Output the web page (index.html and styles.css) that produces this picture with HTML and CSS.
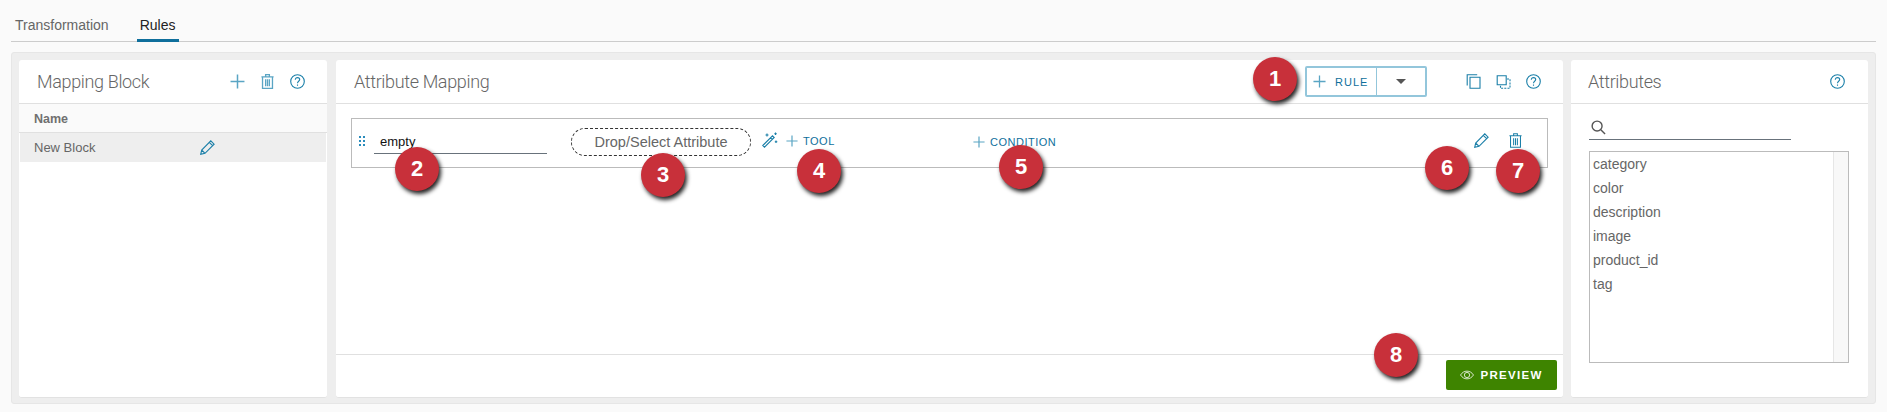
FILE: index.html
```html
<!DOCTYPE html>
<html lang="en">
<head>
  <meta charset="UTF-8" />
  <title>Rules</title>
  <link rel="stylesheet" href="styles.css">
</head>
<body>

  <svg class="defs" width="0" height="0">
    <symbol id="i-plus" viewBox="0 0 14 14"><path d="M7 0.5v13M0.5 7h13"/></symbol>
    <symbol id="i-trash" viewBox="0 0 14 16"><path d="M0.5 3h13M5 3V0.7h4V3M1.700 3v12.300h10.600V3M5 5.500v7.500M7 5.500v7.500M9 5.500v7.500"/></symbol>
    <symbol id="i-help" viewBox="0 0 15 15"><circle cx="7.500" cy="7.500" r="6.800"/><path d="M5.300 5.800c0-1.400 1-2.200 2.200-2.200s2.200.8 2.200 2c0 1.700-2.200 1.700-2.200 3.600M7.500 10.600v1.200"/></symbol>
    <symbol id="i-pencil" viewBox="0 0 15 15"><path d="M0.700 14.300l1-4.300L10.800 0.900l3.300 3.300L5 13.300zM1.700 10l3.300 3.300M9.300 2.400l3.300 3.300"/></symbol>
  </svg>

  <!-- Tabs -->
  <nav class="tabs">
    <a class="tab">Transformation</a>
    <a class="tab tab-active">Rules</a>
  </nav>

  <!-- Panels -->
  <main class="panels">

    <section class="card card-blocks">
      <header class="card-head">
        <h2>Mapping Block</h2>
        <div class="head-icons">
          <svg class="icon icon-lt"><use href="#i-plus"/></svg>
          <svg class="icon icon-lt"><use href="#i-trash"/></svg>
          <svg class="icon"><use href="#i-help"/></svg>
        </div>
      </header>
      <div class="block-title">Name</div>
      <div class="block-row">
        <span class="block-name">New Block</span>
        <svg class="icon"><use href="#i-pencil"/></svg>
      </div>
    </section>

    <section class="card card-mapping">
      <header class="card-head">
        <h2>Attribute Mapping</h2>
        <div class="rule-btn">
          <span class="rule-add"><svg class="icon icon-lt"><use href="#i-plus"/></svg>RULE</span>
          <span class="rule-more"><i class="arrow"></i></span>
        </div>
        <div class="head-icons head-icons-map">
          <svg class="icon" viewBox="0 0 14 15"><path d="M3.500 14.300V3.200h10v11.100zM0.700 11.500V0.700h10"/></svg>
          <svg class="icon" viewBox="0 0 14 15"><path d="M0.700 1.700h9v9h-9z"/><path d="M10.500 5h3v9.300H4v-3" stroke-dasharray="2 1.200"/></svg>
          <svg class="icon"><use href="#i-help"/></svg>
        </div>
      </header>

      <div class="mapping-body">
        <div class="rule-row">
          <span class="handle">
            <i></i><i></i><i></i><i></i><i></i><i></i>
          </span>
          <span class="rule-name">empty</span>
          <span class="drop">Drop/Select Attribute</span>
          <svg class="icon wand" viewBox="0 0 16 16"><path d="M0.800 13.500L10.500 3.800l1.700 1.700-9.700 9.700zM8.500 5.800l1.700 1.700M5 1.500v3M3.500 3h3M13.500 0.500v2.500M12.300 1.700h2.500M14 8.500v2.500M12.800 9.700h2.500"/></svg>
          <span class="link link-tool"><svg class="icon icon-lt"><use href="#i-plus"/></svg>TOOL</span>
          <span class="link link-cond"><svg class="icon icon-lt"><use href="#i-plus"/></svg>CONDITION</span>
          <div class="row-icons">
            <svg class="icon"><use href="#i-pencil"/></svg>
            <svg class="icon"><use href="#i-trash"/></svg>
          </div>
        </div>
      </div>

      <footer class="card-foot">
        <button class="preview" type="button">
          <svg class="eye" viewBox="0 0 16 10"><path d="M0.600 5C2.500 2 5 0.600 8 0.600S13.500 2 15.400 5C13.500 8 11 9.400 8 9.400S2.500 8 0.600 5z"/><circle cx="8" cy="5" r="3"/></svg>
          PREVIEW
        </button>
      </footer>
    </section>

    <section class="card card-attrs">
      <header class="card-head">
        <h2>Attributes</h2>
        <div class="head-icons">
          <svg class="icon"><use href="#i-help"/></svg>
        </div>
      </header>
      <div class="attrs-body">
        <div class="search">
          <svg class="search-icon" viewBox="0 0 16 16"><circle cx="6.500" cy="6.500" r="5.300"/><path d="M10.500 10.500L15 15"/></svg>
        </div>
        <div class="attr-box">
          <ul class="attr-list">
            <li>category</li>
            <li>color</li>
            <li>description</li>
            <li>image</li>
            <li>product_id</li>
            <li>tag</li>
          </ul>
          <div class="attr-scroll"></div>
        </div>
      </div>
    </section>

  </main>

  <!-- Numbered callouts -->
  <span class="callout c1">1</span>
  <span class="callout c2">2</span>
  <span class="callout c3">3</span>
  <span class="callout c4">4</span>
  <span class="callout c5">5</span>
  <span class="callout c6">6</span>
  <span class="callout c7">7</span>
  <span class="callout c8">8</span>

</body>
</html>
```

FILE: styles.css
```css
* {
  box-sizing: border-box;
}

body {
  margin: 0;
  height: 412px;
  overflow: hidden;
  position: relative;
  background-color: #fafafa;
  font-family: "Liberation Sans", Arial, sans-serif;
  color: #666;
}

.defs {
  position: absolute;
}

.icon {
  width: 15px;
  height: 15px;
  fill: none;
  stroke: #1a7fa8;
  stroke-width: 1.1;
  flex: none;
}

.icon-lt {
  stroke: #5aa5c4;
  stroke-width: 1.4;
}

/* tabs */
.tabs {
  margin: 0 11px;
  height: 42px;
  display: flex;
  gap: 31px;
  padding-left: 4px;
  border-bottom: 1px solid #ccc;
}

.tab {
  font-size: 14px;
  color: #666;
  padding: 17px 0 0;
  height: 42px;
}

.tab-active {
  color: #222;
  border-bottom: 3px solid #0f6f9c;
  margin-left: -3px;
  padding-left: 3px;
  padding-right: 4px;
}

/* panels */
.panels {
  margin: 10px 11px 0;
  height: 352px;
  padding: 7px 7px 5px;
  display: flex;
  gap: 8px;
  background-color: #eee;
  border: 1px solid #e6e6e6;
  border-radius: 3px;
}

.card {
  background-color: #fff;
  border-radius: 3px;
  border-bottom: 1px solid #e2e2e2;
  display: flex;
  flex-direction: column;
}

.card-blocks {
  width: 308px;
  margin-right: 1px;
}

.card-mapping {
  flex: 1;
}

.card-attrs {
  width: 297px;
}

.card-head {
  height: 44px;
  flex: none;
  display: flex;
  align-items: center;
  border-bottom: 1px solid #e0e0e0;
}

.card-head h2 {
  margin: 0;
  font-family: Roboto, sans-serif;
  font-size: 18px;
  font-weight: 300;
  letter-spacing: -0.35px;
  color: #666;
}

.card-blocks h2 {
  padding-left: 18px;
}

.card-mapping h2 {
  padding-left: 18px;
}

.card-attrs h2 {
  padding-left: 17px;
}

.head-icons {
  margin-left: auto;
  display: flex;
  gap: 15px;
  padding-right: 22px;
}

.card-attrs .head-icons {
  padding-right: 23px;
}

/* mapping block list */
.block-title {
  height: 29px;
  padding: 8px 15px;
  font-size: 12.5px;
  font-weight: bold;
  color: #707070;
  background-color: #fafafa;
  border-bottom: 1px solid #e0e0e0;
}

.block-row {
  height: 29px;
  display: flex;
  align-items: center;
  padding-left: 14px;
  font-size: 13px;
  background-color: #eee;
  margin: 0 1px;
}

.block-name {
  width: 166px;
}

/* rule button */
.rule-btn {
  margin-left: auto;
  margin-right: 39px;
  width: 122px;
  height: 31px;
  display: flex;
  border: 2px solid #93c6db;
  border-radius: 2px;
}

.rule-add {
  width: 70px;
  display: flex;
  align-items: center;
  gap: 9px;
  padding-left: 6px;
  font-size: 11px;
  letter-spacing: 1px;
  color: #0f6f9c;
  border-right: 1px solid #93c6db;
}

.rule-add .icon {
  width: 13px;
  height: 13px;
}

.rule-more {
  flex: 1;
  display: flex;
  align-items: center;
  justify-content: center;
}

.arrow {
  width: 0;
  height: 0;
  border-left: 5px solid transparent;
  border-right: 5px solid transparent;
  border-top: 5px solid #555;
}

.head-icons-map {
  margin-left: 0;
  padding-right: 22px;
}

/* rule row */
.mapping-body {
  flex: 1;
  padding: 14px 15px;
}

.rule-row {
  height: 50px;
  display: flex;
  align-items: center;
  border: 1px solid #bbb;
  position: relative;
}

.handle {
  width: 6px;
  height: 10px;
  margin-left: 7px;
  margin-top: -4px;
  display: grid;
  grid-template-columns: 2px 2px;
  grid-template-rows: repeat(3, 2px);
  gap: 2px;
}

.handle i {
  background-color: #2a8cbc;
}

.rule-name {
  width: 173px;
  height: 24px;
  margin-left: 9px;
  margin-top: -2px;
  padding: 4px 0 0 6px;
  font-size: 13px;
  color: #111;
  border-bottom: 1px solid #68727b;
}

.drop {
  width: 180px;
  height: 28px;
  margin-left: 24px;
  display: flex;
  align-items: center;
  justify-content: center;
  font-size: 14.5px;
  color: #666;
  border: 1px dashed #333;
  border-radius: 14px;
  margin-top: -3px;
}

.wand {
  width: 16px;
  height: 16px;
  margin-left: 11px;
  margin-top: -6px;
}

.link {
  display: flex;
  align-items: center;
  gap: 5px;
  font-size: 11px;
  letter-spacing: 0.5px;
  color: #0f6f9c;
  margin-top: -5px;
}

.link .icon {
  width: 12px;
  height: 12px;
}

.link-tool {
  width: 187px;
  margin-left: 8px;
}

.link-cond {
  margin-top: -3px;
}

.row-icons {
  margin-left: auto;
  margin-top: -6px;
  display: flex;
  gap: 19px;
  padding-right: 24px;
}

/* footer */
.card-foot {
  height: 43px;
  flex: none;
  display: flex;
  justify-content: flex-end;
  padding: 5px 6px 0 0;
  border-top: 1px solid #e0e0e0;
}

.preview {
  width: 111px;
  height: 30px;
  display: flex;
  align-items: center;
  justify-content: center;
  gap: 6px;
  border: 0;
  border-radius: 2px;
  background-color: #3e8400;
  color: #fff;
  font-family: "Liberation Sans", Arial, sans-serif;
  font-size: 11.5px;
  font-weight: bold;
  letter-spacing: 1.3px;
}

.eye {
  width: 14px;
  height: 10px;
  fill: none;
  stroke: #fff;
  stroke-width: 0.9;
}

/* attributes */
.attrs-body {
  padding: 13px 18px 0;
}

.search {
  width: 202px;
  height: 20px;
  border-bottom: 1px solid #68727b;
}

.search-icon {
  width: 15px;
  height: 15px;
  margin: 3px 0 0 2px;
  display: block;
  fill: none;
  stroke: #555;
  stroke-width: 1.5;
}

.attr-box {
  width: 260px;
  height: 212px;
  margin-top: 11px;
  display: flex;
  border: 1px solid #bbb;
}

.attr-list {
  flex: 1;
  margin: 0;
  padding: 0 0 0 3px;
  list-style: none;
  font-size: 14px;
}

.attr-list li {
  height: 24px;
  line-height: 24px;
}

.attr-scroll {
  width: 15px;
  background-color: #f8f8f8;
  border-left: 1px solid #e6e6e6;
}

/* callouts */
.callout {
  position: absolute;
  width: 44px;
  height: 44px;
  display: flex;
  align-items: center;
  justify-content: center;
  border-radius: 50%;
  background-color: #c8303a;
  color: #fff;
  font-size: 22px;
  font-weight: bold;
  box-shadow: 2px 3px 4px #222;
}

.c1 { left: 1253px; top: 57px; }
.c2 { left: 395px; top: 147px; }
.c3 { left: 641px; top: 153px; }
.c4 { left: 797px; top: 149px; }
.c5 { left: 999px; top: 145px; }
.c6 { left: 1425px; top: 146px; }
.c7 { left: 1496px; top: 149px; }
.c8 { left: 1374px; top: 333px; }
```
